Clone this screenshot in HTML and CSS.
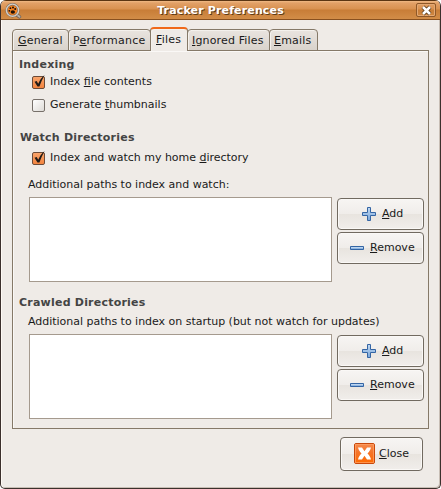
FILE: index.html
```html
<!DOCTYPE html>
<html lang="en">
<head>
<meta charset="utf-8">
<title>Tracker Preferences</title>
<link rel="stylesheet" href="styles.css">
</head>
<body>
<svg class="defs" width="0" height="0">
  <defs>
    <linearGradient id="blue" x1="0" y1="0" x2="0" y2="1"><stop offset="0" stop-color="#c3daf2"/><stop offset="1" stop-color="#79a6da"/></linearGradient>
    <linearGradient id="orange" x1="0" y1="0" x2="0" y2="1"><stop offset="0" stop-color="#f58b50"/><stop offset=".45" stop-color="#f57428"/><stop offset="1" stop-color="#ff6a00"/></linearGradient>
    <symbol id="plus" viewBox="0 0 16 16"><path d="M6.500 1.500h3v5h5v3h-5v5h-3v-5h-5v-3h5z" fill="url(#blue)" stroke="#3465a4"/></symbol>
    <symbol id="minus" viewBox="0 0 16 16"><path d="M1.500 6.500h13v3h-13z" fill="#8db5e2" stroke="#3465a4"/><path d="M2 7.500h12" stroke="#bdd5ef"/></symbol>
    <symbol id="tick" viewBox="0 0 14 15"><path d="M2.500 6.800l2.200-.7 1.500 2.700C7.600 5.500 9.500 2.500 12.600 0 10.500 3.800 8.800 7.600 7.400 11.500H5.500z" fill="#211b17"/></symbol>
  </defs>
</svg>
<div class="window">
  <header class="titlebar">
    <svg class="logo" width="17" height="16" viewBox="0 0 17 16">
      <path d="M11.500 11.500l3 2.300" stroke="#6e6259" stroke-width="3.500" stroke-linecap="round"/>
      <path d="M11.500 11.500l3 2.300" stroke="#b9b0a6" stroke-width="2" stroke-linecap="round"/>
      <circle cx="7.500" cy="7.200" r="6" fill="#f58220" stroke="#75695f" stroke-width="2.400"/>
      <circle cx="7.500" cy="7.200" r="6.100" fill="none" stroke="#d3ccc4" stroke-width="1.400"/>
      <ellipse cx="7.800" cy="9" rx="2.200" ry="1.800" fill="#201208"/>
      <g fill="#201208"><circle cx="4.300" cy="7.800" r=".9"/><circle cx="5.400" cy="5.200" r=".9"/><circle cx="8" cy="4.500" r="1"/><circle cx="10.200" cy="6" r="1"/></g>
    </svg>
    <h1 class="title">Tracker Preferences</h1>
    <span class="close-box"><svg width="11" height="11" viewBox="0 0 11 11"><path d="M2 2l7 7M9 2l-7 7" stroke="#51310f" stroke-width="4"/><path d="M2 2l7 7M9 2l-7 7" stroke="#fff" stroke-width="2.600"/></svg></span>
  </header>
  <nav class="tabs">
    <div class="tab general"><span><u>G</u>eneral</span></div>
    <div class="tab performance"><span>P<u>e</u>rformance</span></div>
    <div class="tab files"><span><u>F</u>iles</span></div>
    <div class="tab ignored"><span><u>I</u>gnored Files</span></div>
    <div class="tab emails"><span><u>E</u>mails</span></div>
  </nav>
  <main class="panel">
    <h2 class="first">Indexing</h2>
    <div class="option first-option"><span class="check on"><svg width="14" height="15"><use href="#tick"/></svg></span><span>Index <u>f</u>ile contents</span></div>
    <div class="option"><span class="check"></span><span>Generate <u>t</u>humbnails</span></div>
    <h2 class="watch">Watch Directories</h2>
    <div class="option home"><span class="check on"><svg width="14" height="15"><use href="#tick"/></svg></span><span>Index and watch my home <u>d</u>irectory</span></div>
    <p class="caption">Additional paths to index and watch:</p>
    <div class="paths">
      <div class="list"></div>
      <div class="actions">
        <div class="button add"><svg width="16" height="16"><use href="#plus"/></svg><span><u>A</u>dd</span></div>
        <div class="button"><svg width="16" height="16"><use href="#minus"/></svg><span><u>R</u>emove</span></div>
      </div>
    </div>
    <h2 class="crawled">Crawled Directories</h2>
    <p class="caption second">Additional paths to index on startup (but not watch for updates)</p>
    <div class="paths">
      <div class="list"></div>
      <div class="actions">
        <div class="button add"><svg width="16" height="16"><use href="#plus"/></svg><span><u>A</u>dd</span></div>
        <div class="button"><svg width="16" height="16"><use href="#minus"/></svg><span><u>R</u>emove</span></div>
      </div>
    </div>
  </main>
  <footer class="footer">
    <div class="button close"><svg width="21" height="21" viewBox="0 0 21 21"><rect x=".5" y=".5" width="20" height="20" rx="1.500" fill="url(#orange)" stroke="#c9480b"/><rect x="1.500" y="1.500" width="18" height="18" fill="none" stroke="#ffa469" stroke-opacity=".7"/><path d="M4 4.500h4l2.500 3.700L13 4.500h4c-.5 2.500-2 4.300-3.500 6 1.700 1.700 3 3.500 3.500 6h-4l-2.500-3.700L8 16.500H4c.5-2.500 1.800-4.300 3.500-6-1.500-1.700-3-3.500-3.500-6z" fill="#fff"/></svg><span><u>C</u>lose</span></div>
  </footer>
</div>
</body>
</html>
```

FILE: styles.css
```css
* { box-sizing: border-box; }
body { margin: 0; background: #fff; font: 11px/14px "DejaVu Sans", sans-serif; color: #1a1a1a; overflow: hidden; }
.defs { position: absolute; }
svg { display: block; flex: none; }
u { text-decoration: underline; text-decoration-thickness: 1px; text-underline-offset: 1px; text-decoration-skip-ink: none; }
h1, h2, p { margin: 0; white-space: nowrap; }
.window { width: 441px; height: 489px; background: #efebe7; border: 1px solid #3b302c; border-width: 0 1px 1px; border-radius: 6px 6px 5px 5px; overflow: hidden; box-shadow: inset 1px 0 #fffaf5, inset -1px -1px #c8beb5; }
.titlebar { height: 20px; display: flex; align-items: center; border-top: 1px solid #5b3513; border-bottom: 1px solid #88501f; background: linear-gradient(#f0ba85 0, #e2a067 2px, #d99150 8px, #c87d37 9px, #d28d48 100%); padding: 0 4px 0 4px; }
.logo { margin-top: 1px; }
.title { flex: 1; text-align: center; padding-left: 3px; font-size: 11px; letter-spacing: .15px; line-height: 17px; color: #fff; text-shadow: 1px 1px #603b18; }
.close-box { width: 20px; height: 14px; display: grid; place-items: center; border: 1px solid #8e5828; border-radius: 2px; box-shadow: inset 0 0 0 1px #e3a873; }
.tabs { height: 31px; padding: 7px 0 0 11px; display: flex; align-items: flex-end; }
.tab { height: 22px; margin-left: -1px; border: 1px solid #857968; border-radius: 4px 4px 0 0; background: linear-gradient(#e9e4df, #d9d3cc); box-shadow: inset 1px 1px #f4f1ed; padding: 4px 0 0 5px; white-space: nowrap; }
.general { width: 57px; margin-left: 0; letter-spacing: .2px; }
.performance { width: 83px; padding-left: 4px; letter-spacing: .25px; }
.files { width: 38px; height: 24px; border-top: 2px solid #f0691a; border-bottom: 0; background: #efebe7; position: relative; z-index: 1; letter-spacing: .2px; }
.ignored { width: 83px; padding-left: 4px; letter-spacing: .15px; }
.emails { width: 49px; padding-left: 4px; letter-spacing: .2px; }
.panel { width: 417px; height: 379px; margin: -1px 0 0 11px; border: 1px solid #857968; box-shadow: inset 1px 1px #faf8f6; padding: 0 0 0 6px; }
h2 { font-size: 11px; line-height: 14px; color: #444; letter-spacing: .22px; }
.first { padding-top: 7px; }
.option { height: 23px; display: flex; align-items: flex-start; padding-left: 13px; gap: 5px; white-space: nowrap; }
.first-option { margin-top: 3px; }
.check { width: 13px; height: 13px; margin-top: 1px; border: 1px solid #77706a; border-radius: 2px; background: linear-gradient(135deg, #fff, #dedbd7); }
.check.on { border-color: #6c4b38; background: linear-gradient(#f9a46b, #f3843f); }
.check svg { margin: -2px 0 0 -1px; }
.watch { margin-top: 10px; padding-left: 1px; }
.home { margin-top: 6px; letter-spacing: -.02px; }
.caption { padding-left: 9px; margin-top: 4px; letter-spacing: -.02px; }
.paths { display: flex; gap: 5px; margin: 5px 0 0 10px; }
.list { width: 303px; height: 85px; border: 1px solid #a59a8e; background: #fff; }
.actions { padding-top: 1px; display: flex; flex-direction: column; gap: 2px; }
.button { width: 87px; height: 32px; display: flex; align-items: center; padding: 0 0 1px 11px; gap: 5px; border: 1px solid #716a60; border-radius: 4px; background: linear-gradient(#f7f5f3 0, #f0edea 49%, #e8e4df 51%, #f1eeeb 100%); box-shadow: inset 0 0 0 1px #faf8f6; }
.button.add { padding-left: 23px; }
.crawled { margin-top: 14px; }
.caption.second { margin-top: 5px; }
.footer { height: 59px; padding: 8px 17px 0 0; display: flex; justify-content: flex-end; }
.button.close { width: 83px; height: 34px; padding: 0 0 1px 13px; gap: 4px; }
```
